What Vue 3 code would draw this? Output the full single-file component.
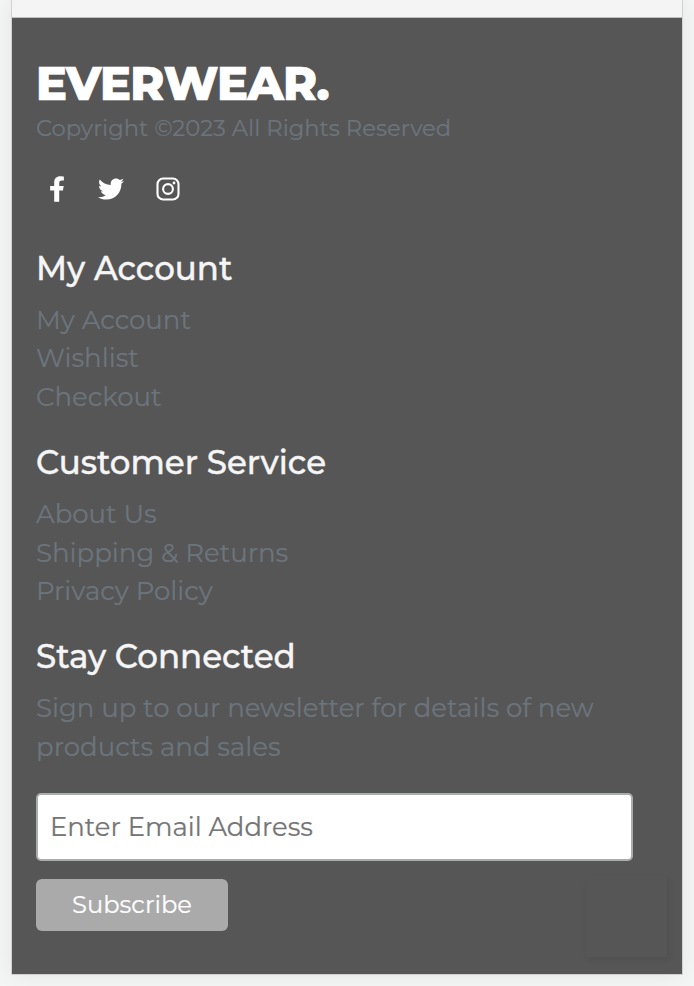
<script setup>
const groups = [
  { title: 'My Account', cls: 'account', links: ['My Account', 'Wishlist', 'Checkout'] },
  { title: 'Customer Service', cls: 'service', links: ['About Us', 'Shipping & Returns', 'Privacy Policy'] },
]
</script>

<template>
  <div class="page">
    <div class="frame">
      <div class="strip"></div>
      <footer class="footer">
        <div class="logo">EVERWEAR.</div>
        <p class="copyright">Copyright ©2023 All Rights Reserved</p>
        <div class="social">
          <svg class="facebook" viewBox="0 0 320 512"><path d="M279.14 288l14.22-92.66h-88.91v-60.13c0-25.35 12.42-50.06 52.24-50.06h40.42V6.26S260.43 0 225.36 0c-73.22 0-121.08 44.38-121.08 124.72v70.62H22.89V288h81.39v224h100.17V288z" /></svg>
          <svg class="twitter" viewBox="0 0 512 512"><path d="M459.37 151.716c.325 4.548.325 9.097.325 13.645 0 138.72-105.583 298.558-298.558 298.558-59.452 0-114.68-17.219-161.137-47.106 8.447.974 16.568 1.299 25.34 1.299 49.055 0 94.213-16.568 130.274-44.832-46.132-.975-84.792-31.188-98.112-72.772 6.498.974 12.995 1.624 19.818 1.624 9.421 0 18.843-1.3 27.614-3.573-48.081-9.747-84.143-51.98-84.143-102.985v-1.299c13.969 7.797 30.214 12.67 47.431 13.319-28.264-18.843-46.781-51.005-46.781-87.391 0-19.492 5.197-37.36 14.294-52.954 51.655 63.675 129.3 105.258 216.365 109.807-1.624-7.797-2.599-15.918-2.599-24.04 0-57.828 46.782-104.934 104.934-104.934 30.213 0 57.502 12.67 76.67 33.137 23.715-4.548 46.456-13.32 66.599-25.34-7.798 24.366-24.366 44.833-46.132 57.827 21.117-2.273 41.584-8.122 60.426-16.243-14.292 20.791-32.161 39.308-52.628 54.253z" /></svg>
          <svg class="instagram" viewBox="0 0 24 24"><rect x="1.5" y="1.5" width="21" height="21" rx="5.6" /><circle cx="12" cy="12" r="4.9" /><circle class="dot" cx="18" cy="6" r="1.4" /></svg>
        </div>
        <section v-for="g in groups" :key="g.title" class="group" :class="g.cls">
          <h5>{{ g.title }}</h5>
          <ul>
            <li v-for="l in g.links" :key="l">{{ l }}</li>
          </ul>
        </section>
        <section class="group connect">
          <h5>Stay Connected</h5>
          <p class="pitch">Sign up to our newsletter for details of new products and sales</p>
        </section>
        <form @submit.prevent>
          <input type="email" placeholder="Enter Email Address" />
          <button type="submit">Subscribe</button>
        </form>
        <div class="badge"></div>
      </footer>
    </div>
  </div>
</template>

<style>
body { background: #f3f6f5; }
</style>

<style scoped>
.page {
  height: 986px;
  overflow: hidden;
  box-sizing: border-box;
  padding: 0 11px 11px;
  font-family: Montserrat, Inter, sans-serif;
  color: #6c757d;
  -webkit-text-stroke: 0.2px currentColor;
}
.frame {
  height: 975px;
  box-sizing: border-box;
  border: 1px solid #d0d1d1;
  border-top: 0;
  background: #f4f4f4;
  box-shadow: 0 0 22px rgba(0, 0, 0, 0.07);
}
.strip {
  height: 17px;
  border-bottom: 1px solid #bdbdbd;
}
.footer {
  position: relative;
  height: 956px;
  box-sizing: border-box;
  padding: 40px 24px 0;
  background: #565656;
}
.logo {
  height: 55px;
  line-height: 51px;
  font-size: 46.1px;
  font-weight: 800;
  letter-spacing: -0.6px;
  color: #fff;
  -webkit-text-stroke: 0.7px #fff;
}
.copyright {
  margin: 0;
  height: 30px;
  line-height: 31px;
  font-size: 22.7px;
  white-space: nowrap;
}
.social {
  display: flex;
  align-items: center;
  height: 26px;
  margin-top: 33px;
  padding-left: 13px;
}
.social svg { fill: #fff; }
.facebook { width: 16px; height: 26px; }
.twitter { width: 26px; height: 26px; margin-left: 33px; }
.instagram { width: 24px; height: 24px; margin-left: 32px; }
.social .instagram { fill: none; stroke: #fff; stroke-width: 2.1; }
.social .instagram .dot { fill: #fff; stroke: none; }
.group {
  height: 169.2px;
  margin-bottom: 25.2px;
}
.account { margin-top: 46.5px; }
h5 {
  margin: 0 0 12.2px;
  line-height: 40px;
  font-size: 32.5px;
  font-weight: 500;
  color: #f5f5f5;
  -webkit-text-stroke: 0.4px #f5f5f5;
}
ul {
  margin: 0;
  padding: 0;
  list-style: none;
}
li, .pitch {
  margin: 0;
  line-height: 38.7px;
  font-size: 26px;
}
.group.connect { height: 130.2px; }
form {
  display: flex;
  flex-direction: column;
  align-items: flex-start;
  gap: 18.4px;
}
input {
  width: 597px;
  height: 68px;
  box-sizing: border-box;
  padding: 0 12px;
  border: 2px solid #a9adad;
  border-radius: 5px;
  background: #fff;
  font: inherit;
  font-size: 25.9px;
}
input::placeholder { color: #757575; }
button {
  width: 192px;
  height: 52px;
  padding: 0 0 1px;
  border: 0;
  border-radius: 6px;
  background: #aaa;
  color: #fff;
  font: inherit;
  font-size: 24.2px;
}
.badge {
  position: absolute;
  right: 15px;
  bottom: 17px;
  width: 81px;
  height: 81px;
  background: #565656;
  box-shadow: 2px 3px 6px rgba(0, 0, 0, 0.07);
}
</style>
